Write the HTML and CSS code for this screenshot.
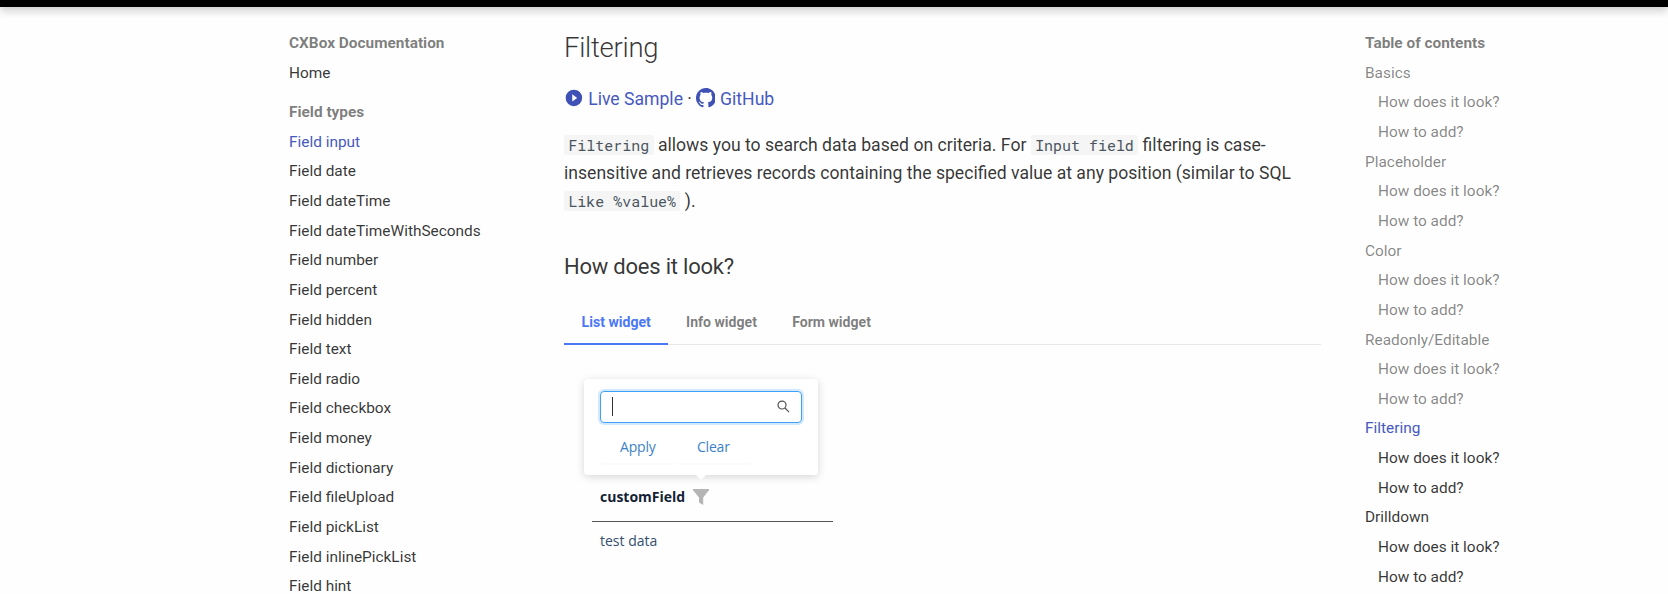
FILE: index.html
```html
<!DOCTYPE html>
<html lang="en">
<head>
<meta charset="utf-8">
<title>Field input - CXBox Documentation</title>
<link rel="stylesheet" href="styles.css">
</head>
<body>
<header class="topbar"></header>
<div class="page">
  <nav class="nav">
    <div class="title">CXBox Documentation</div>
    <a>Home</a>
    <div class="title group">Field types</div>
    <a class="active">Field input</a>
    <a>Field date</a>
    <a>Field dateTime</a>
    <a>Field dateTimeWithSeconds</a>
    <a>Field number</a>
    <a>Field percent</a>
    <a>Field hidden</a>
    <a>Field text</a>
    <a>Field radio</a>
    <a>Field checkbox</a>
    <a>Field money</a>
    <a>Field dictionary</a>
    <a>Field fileUpload</a>
    <a>Field pickList</a>
    <a>Field inlinePickList</a>
    <a>Field hint</a>
  </nav>
  <main class="content">
    <h2>Filtering</h2>
    <p class="links">
      <svg class="icon" viewBox="0 0 24 24"><path d="M10 16.5v-9l6 4.5M12 2A10 10 0 0 0 2 12a10 10 0 0 0 10 10 10 10 0 0 0 10-10A10 10 0 0 0 12 2Z" fill-rule="evenodd"/></svg>
      <a>Live Sample</a> ·
      <svg class="icon github" viewBox="0 0 16 16"><path d="M8 0C3.58 0 0 3.58 0 8c0 3.54 2.29 6.53 5.47 7.59.4.07.55-.17.55-.38 0-.19-.01-.82-.01-1.49-2.01.37-2.53-.49-2.69-.94-.09-.23-.48-.94-.82-1.13-.28-.15-.68-.52-.01-.53.63-.01 1.08.58 1.23.82.72 1.21 1.87.87 2.33.66.07-.52.28-.87.51-1.07-1.78-.2-3.64-.89-3.64-3.95 0-.87.31-1.59.82-2.15-.08-.2-.36-1.02.08-2.12 0 0 .67-.21 2.2.82.64-.18 1.32-.27 2-.27s1.36.09 2 .27c1.53-1.04 2.2-.82 2.2-.82.44 1.1.16 1.92.08 2.12.51.56.82 1.27.82 2.15 0 3.07-1.87 3.75-3.65 3.95.29.25.54.73.54 1.48 0 1.07-.01 1.93-.01 2.2 0 .21.15.46.55.38A8.01 8.01 0 0 0 16 8c0-4.42-3.58-8-8-8z"/></svg>
      <a>GitHub</a>
    </p>
    <p class="text"><code>Filtering</code> allows you to search data based on criteria. For <code>Input field</code> filtering is case-<br>insensitive and retrieves records containing the specified value at any position (similar to SQL<br><code>Like %value%</code> ).</p>
    <h3>How does it look?</h3>
    <div class="tabs">
      <div class="tab selected">List widget</div>
      <div class="tab">Info widget</div>
      <div class="tab">Form widget</div>
    </div>
    <section class="demo">
      <div class="popup">
        <div class="search">
          <span class="caret"></span>
          <svg class="glass" viewBox="0 0 14 14"><circle cx="5.4" cy="5.4" r="4.3"/><path d="M8.6 8.6 13 13"/></svg>
        </div>
        <div class="actions"><span>Apply</span><span>Clear</span></div>
      </div>
      <div class="field-head">customField
        <svg class="funnel" viewBox="0 0 16 16"><path d="M0 0h16v1.2L10.2 8.5V16L6 13.4V8.5L0 1.2z"/></svg>
      </div>
      <div class="field-value">test data</div>
    </section>
  </main>
  <nav class="nav toc">
    <div class="title">Table of contents</div>
    <a class="past">Basics</a>
    <a class="past sub">How does it look?</a>
    <a class="past sub">How to add?</a>
    <a class="past">Placeholder</a>
    <a class="past sub">How does it look?</a>
    <a class="past sub">How to add?</a>
    <a class="past">Color</a>
    <a class="past sub">How does it look?</a>
    <a class="past sub">How to add?</a>
    <a class="past">Readonly/Editable</a>
    <a class="past sub">How does it look?</a>
    <a class="past sub">How to add?</a>
    <a class="active">Filtering</a>
    <a class="sub">How does it look?</a>
    <a class="sub">How to add?</a>
    <a>Drilldown</a>
    <a class="sub">How does it look?</a>
    <a class="sub">How to add?</a>
  </nav>
</div>
</body>
</html>
```
FILE: styles.css
```css
* { box-sizing: border-box; }
html, body { height: 594px; overflow: hidden; }
body {
  margin: 0;
  background: #fefefe;
  color: rgba(0, 0, 0, .8);
  font-family: Roboto, "Liberation Sans", sans-serif;
}
.topbar {
  height: 7px;
  background: #000;
  box-shadow: 0 0 4px rgba(0, 0, 0, .1), 0 4px 9px rgba(0, 0, 0, .2);
}
.page {
  display: grid;
  grid-template-columns: 231px 757px 200px;
  column-gap: 44px;
  padding-left: 289px;
}
.nav {
  padding-top: 26.13px;
  font-size: 15.4px;
  line-height: 20.02px;
}
.nav a { display: block; margin-top: 9.625px; white-space: nowrap; }
.nav .title { font-weight: 700; color: rgba(0, 0, 0, .52); white-space: nowrap; }
.nav .group { margin-top: 19.3px; }
.nav .active { color: #4659c0; }
.nav .past { color: rgba(0, 0, 0, .49); }
.nav .sub { padding-left: 13px; }
.content { font-size: 17.6px; line-height: 28.16px; }
h2 {
  margin: 22px 0 0;
  font-size: 27.5px;
  font-weight: 300;
  line-height: 38.5px;
  letter-spacing: -.275px;
}
.links { margin: 17px 0 0; }
.links a { color: #4659c0; }
.icon { width: 19.8px; height: 19.8px; fill: #4051b5; vertical-align: -3.6px; }
.github { margin: 0 .4px 0 -.8px; }
.text { margin: 18px 0 0; white-space: nowrap; }
code {
  padding: 0 4.4px;
  border-radius: 2px;
  background: #f5f5f5;
  color: #4a5560;
  font-family: "Roboto Mono", "Liberation Mono", monospace;
  font-size: 14.96px;
}
h3 {
  margin: 34.5px 0 0;
  font-size: 22px;
  font-weight: 400;
  line-height: 33px;
  letter-spacing: -.22px;
}
.tabs {
  display: flex;
  height: 44px;
  margin-top: 18px;
  box-shadow: inset 0 -1px #e8e8e8;
  font-size: 14.08px;
  font-weight: 700;
  line-height: 42px;
  color: rgba(0, 0, 0, .52);
}
.tab { padding: 0 17.6px; white-space: nowrap; }
.tab.selected { color: #4c78f5; border-bottom: 2px solid #4c78f5; }
.demo {
  width: 241px;
  margin: 34px 0 0 28px;
  font-family: "Open Sans", "Noto Sans", sans-serif;
  font-size: 14px;
  line-height: 20px;
}
.popup {
  position: relative;
  width: 234px;
  height: 96px;
  margin-left: -8px;
  padding: 12px 16px;
  border-radius: 4px;
  background: #fff;
  box-shadow: 0 2px 8px rgba(0, 0, 0, .16);
}
.popup::after {
  content: "";
  position: absolute;
  left: 112px;
  bottom: -5px;
  border: solid transparent;
  border-width: 0 5px;
  border-top: 5px solid #fff;
}
.search {
  display: flex;
  align-items: center;
  justify-content: space-between;
  height: 32px;
  padding: 0 11px;
  border: 1px solid #40a0f5;
  border-radius: 4px;
  box-shadow: 0 0 0 2px rgba(24, 144, 255, .2);
}
.caret { width: 1px; height: 19px; background: #333; }
.glass { width: 13px; height: 13px; fill: none; stroke: #555; stroke-width: 1.3; }
.actions { display: flex; gap: 2px; margin-top: 8px; color: #3b82c8; line-height: 32px; letter-spacing: -.2px; }
.actions span {
  width: 75px;
  padding-left: 20px;
  border-radius: 4px;
  box-shadow: 0 2px 0 rgba(0, 0, 0, .016);
}
.field-head {
  display: flex;
  align-items: center;
  gap: 8px;
  height: 47px;
  padding: 0 0 2px 8px;
  border-bottom: 1px solid #555;
  color: #141f35;
  font-weight: 700;
}
.funnel { width: 16px; height: 16px; fill: #b5b5b5; }
.field-value { padding: 9px 8px; color: #34506e; }
```
